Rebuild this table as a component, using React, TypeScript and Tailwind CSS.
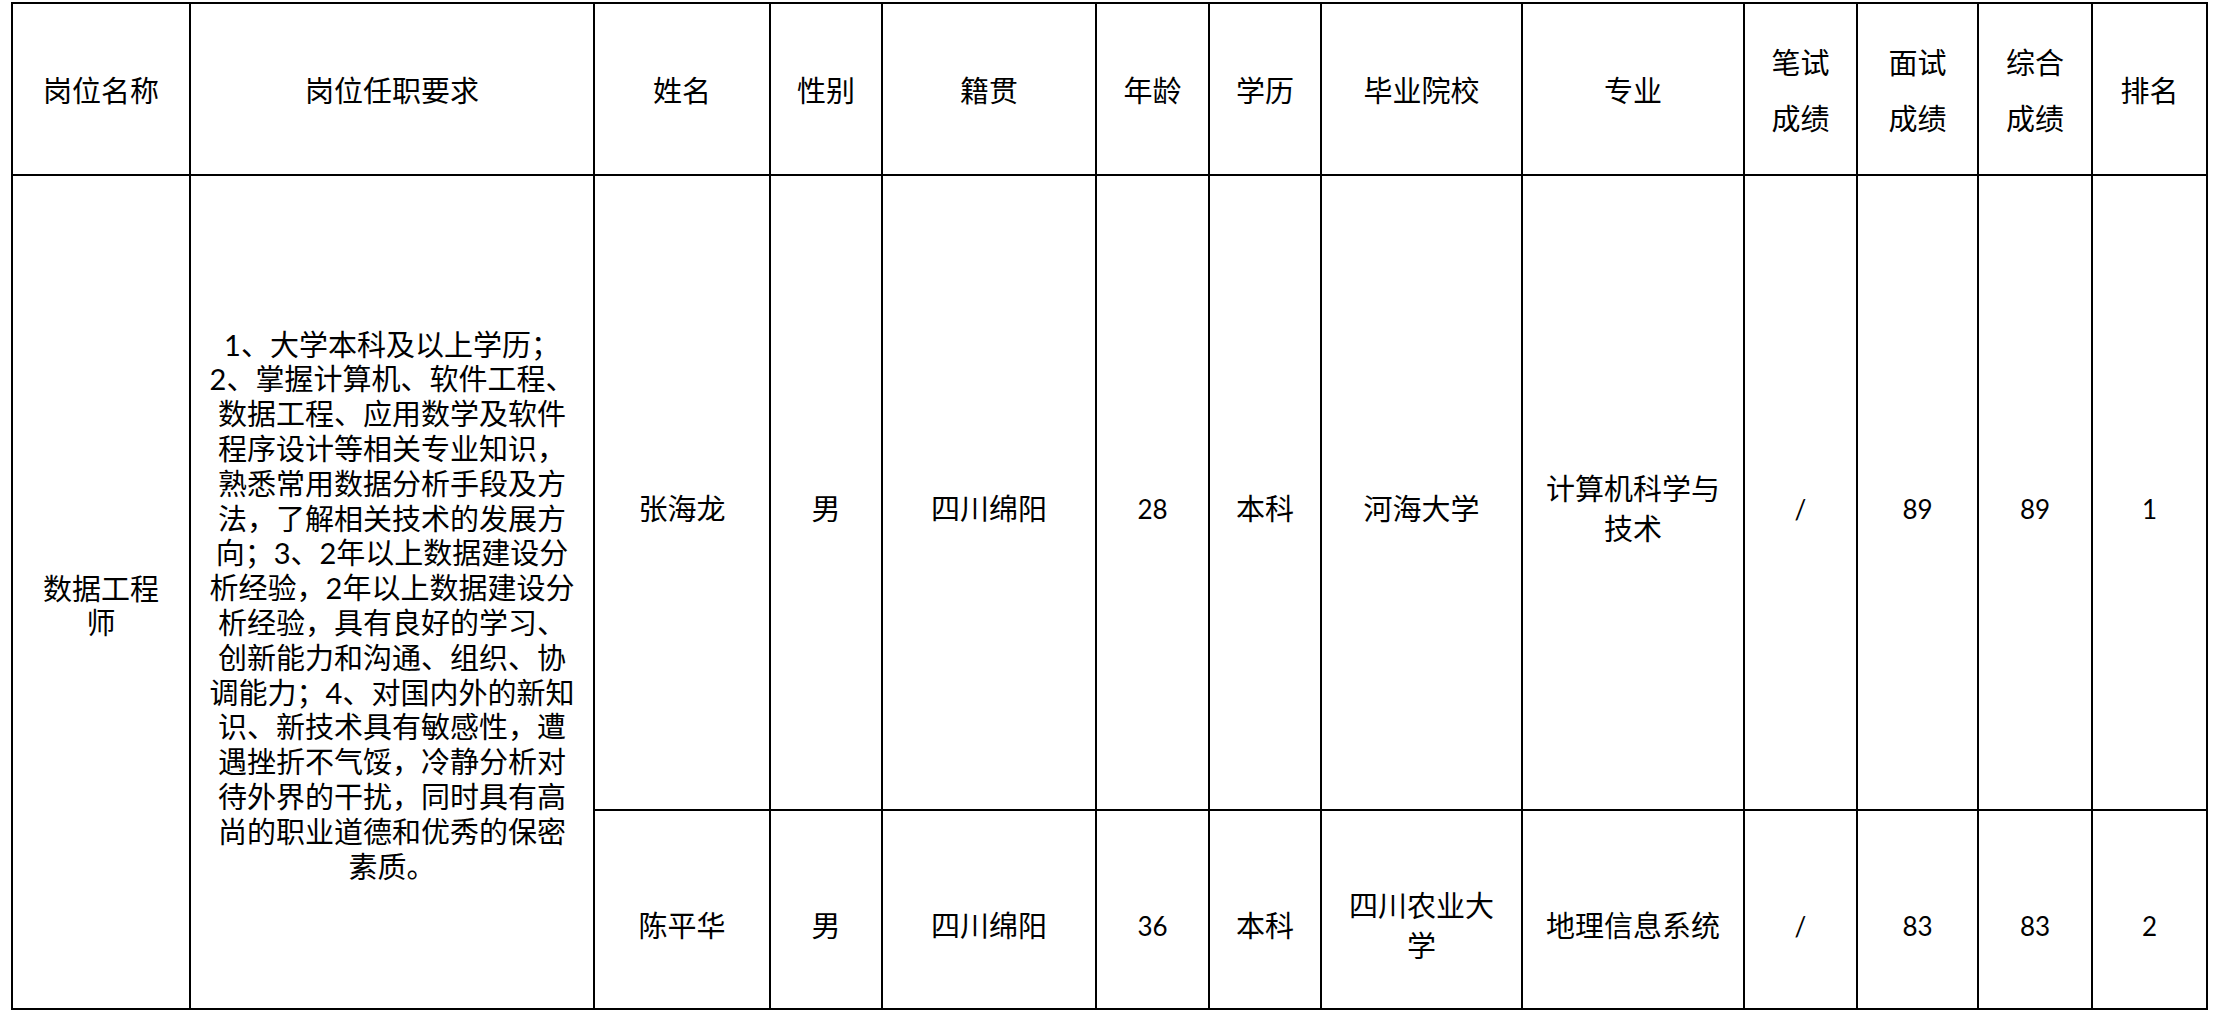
import React from 'react';

const cjk = "font-['Lato','Noto_Sans_CJK_SC',sans-serif]";

const requirementLines = [
  '1、大学本科及以上学历；',
  '2、掌握计算机、软件工程、',
  '数据工程、应用数学及软件',
  '程序设计等相关专业知识，',
  '熟悉常用数据分析手段及方',
  '法，了解相关技术的发展方',
  '向；3、2年以上数据建设分',
  '析经验，2年以上数据建设分',
  '析经验，具有良好的学习、',
  '创新能力和沟通、组织、协',
  '调能力；4、对国内外的新知',
  '识、新技术具有敏感性，遭',
  '遇挫折不气馁，冷静分析对',
  '待外界的干扰，同时具有高',
  '尚的职业道德和优秀的保密',
  '素质。',
];

const colWidths = [
  'w-[178px]',
  'w-[404px]',
  'w-[176px]',
  'w-[112px]',
  'w-[214px]',
  'w-[113px]',
  'w-[112px]',
  'w-[201px]',
  'w-[222px]',
  'w-[113px]',
  'w-[121px]',
  'w-[114px]',
  'w-[115px]',
];

const headers: string[][] = [
  ['岗位名称'],
  ['岗位任职要求'],
  ['姓名'],
  ['性别'],
  ['籍贯'],
  ['年龄'],
  ['学历'],
  ['毕业院校'],
  ['专业'],
  ['笔试', '成绩'],
  ['面试', '成绩'],
  ['综合', '成绩'],
  ['排名'],
];

interface Candidate {
  name: string;
  gender: string;
  origin: string;
  age: string;
  degree: string;
  school: string[];
  major: string[];
  written: string;
  interview: string;
  total: string;
  rank: string;
}

const candidates: Candidate[] = [
  {
    name: '张海龙',
    gender: '男',
    origin: '四川绵阳',
    age: '28',
    degree: '本科',
    school: ['河海大学'],
    major: ['计算机科学与', '技术'],
    written: '/',
    interview: '89',
    total: '89',
    rank: '1',
  },
  {
    name: '陈平华',
    gender: '男',
    origin: '四川绵阳',
    age: '36',
    degree: '本科',
    school: ['四川农业大', '学'],
    major: ['地理信息系统'],
    written: '/',
    interview: '83',
    total: '83',
    rank: '2',
  },
];

const Lines: React.FC<{ lines: string[] }> = ({ lines }) => (
  <>
    {lines.map((l, i) => (
      <div key={i}>{l}</div>
    ))}
  </>
);

const TextCell: React.FC<{ lines: string[] }> = ({ lines }) => (
  <td className="border-2 border-black text-center align-middle pt-[32px] px-1 text-[29px] leading-[40px]">
    <Lines lines={lines} />
  </td>
);

const NumCell: React.FC<{ value: string }> = ({ value }) => (
  <td className="border-2 border-black text-center align-middle pt-[32px] px-1 text-[26px] leading-[40px] font-['Lato',sans-serif]">
    {value}
  </td>
);

export default function App() {
  return (
    <div className={`w-[2214px] h-[1017px] bg-white text-black ${cjk}`}>
      <div className="pl-[11px] pt-[2px]">
        <table className="table-fixed border-collapse w-[2196px]">
          <colgroup>
            {colWidths.map((w, i) => (
              <col key={i} className={w} />
            ))}
          </colgroup>
          <thead>
            <tr className="h-[172px]">
              {headers.map((h, i) => (
                <th
                  key={i}
                  className="border-2 border-black text-center align-middle font-normal text-[29px] leading-[56px] pt-[4px]"
                >
                  <Lines lines={h} />
                </th>
              ))}
            </tr>
          </thead>
          <tbody>
            {candidates.map((c, idx) => (
              <tr key={c.name} className={idx === 0 ? 'h-[635px]' : 'h-[199px]'}>
                {idx === 0 && (
                  <>
                    <td
                      rowSpan={2}
                      className="border-2 border-black text-center align-middle pt-[28px] px-[20px] text-[29px] leading-[34px]"
                    >
                      <Lines lines={['数据工程', '师']} />
                    </td>
                    <td
                      rowSpan={2}
                      className="border-2 border-black text-center align-middle pt-[28px] px-2 text-[29px] leading-[34.8px]"
                    >
                      <Lines lines={requirementLines} />
                    </td>
                  </>
                )}
                <TextCell lines={[c.name]} />
                <TextCell lines={[c.gender]} />
                <TextCell lines={[c.origin]} />
                <NumCell value={c.age} />
                <TextCell lines={[c.degree]} />
                <TextCell lines={c.school} />
                <TextCell lines={c.major} />
                <NumCell value={c.written} />
                <NumCell value={c.interview} />
                <NumCell value={c.total} />
                <NumCell value={c.rank} />
              </tr>
            ))}
          </tbody>
        </table>
      </div>
    </div>
  );
}
